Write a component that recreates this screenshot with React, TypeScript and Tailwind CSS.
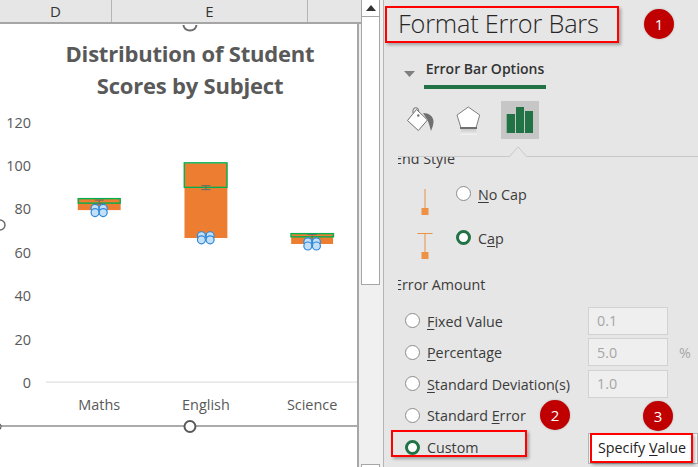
import React from "react";

const font = '"Open Sans", "Noto Sans", sans-serif';

function Radio({ on }: { on?: boolean }) {
  return on ? (
    <span className="block w-[15px] h-[15px] shrink-0 rounded-full bg-white border-[3.5px] border-[#217346]" />
  ) : (
    <span className="block w-[15px] h-[15px] shrink-0 rounded-full bg-white border border-[#8c8c8c]" />
  );
}

function Option({ label, on, input, unit }: { label: React.ReactNode; on?: boolean; input?: string; unit?: string }) {
  return (
    <div className="flex items-center h-[31.6px] pl-[7px]">
      <Radio on={on} />
      <span className="ml-[7px] w-[161px] pt-[1px] text-[14.3px] text-[#3b3b3b] whitespace-nowrap">{label}</span>
      {input && (
        <span className="flex items-center w-[80px] h-[28px] px-2 bg-[#efefef] border border-[#d2d2d2] text-[14.3px] text-[#a6a6a6]">
          {input}
        </span>
      )}
      {unit && <span className="ml-[11px] text-[14.3px] text-[#a6a6a6]">{unit}</span>}
    </div>
  );
}

function Badge({ n, className }: { n: string; className: string }) {
  return (
    <span className={"absolute flex items-center justify-center w-[30px] h-[30px] rounded-full bg-[#c00000] text-white text-[15px] shadow-[0_0_2px_rgba(0,0,0,0.25)] " + className}>
      {n}
    </span>
  );
}

function Chart() {
  const labels: [string, number][] = [["120", 123], ["100", 166], ["80", 209], ["60", 253], ["40", 296], ["20", 340], ["0", 383]];
  const dots = (a: number, b: number, y1: number, y2: number) =>
    [[a, y1], [b, y1], [a, y2], [b, y2]].map(([cx, cy], i) => (
      <circle key={i} cx={cx} cy={cy} r="4" fill="#c4e0f7" stroke="#2e88d8" strokeWidth="1.2" />
    ));
  const whisker = (x: number, y1: number, y2: number) => (
    <g stroke="#5f6b66" strokeWidth="1">
      <line x1={x - 4.5} x2={x + 4.5} y1={y1} y2={y1} />
      <line x1={x - 4.5} x2={x + 4.5} y1={y2} y2={y2} />
      <line x1={x} x2={x} y1={y1} y2={y2} />
    </g>
  );
  return (
    <svg className="absolute inset-0 w-full h-full" viewBox="0 24 358 443" style={{ fontFamily: font }}>
      <path d="M184 24.500a6 5 0 0 0 13 0" fill="white" stroke="#6b6b6b" strokeWidth="2" />
      <path d="M0 220a5 5 0 0 1 0 10" fill="white" stroke="#6b6b6b" strokeWidth="1.500" />
      {labels.map(([t, y]) => (
        <text key={t} x="31" y={y + 5} textAnchor="end" fontSize="14.500" fill="#595959">{t}</text>
      ))}
      <line x1="46" x2="358" y1="382.500" y2="382.500" stroke="#d9d9d9" />

      <rect x="78" y="198" width="43" height="12" fill="#ed7d31" />
      <rect x="78.500" y="198.500" width="42" height="4.500" fill="none" stroke="#00b050" strokeWidth="1.400" />
      {whisker(99.500, 200, 204)}
      {dots(95.300, 103.500, 208.300, 212.500)}

      <rect x="185" y="163" width="43" height="75" fill="#ed7d31" />
      <rect x="184.800" y="162.600" width="42.800" height="24.600" fill="none" stroke="#00b050" strokeWidth="1.400" />
      {whisker(206.500, 185.500, 189.500)}
      {dots(202, 210.700, 235.700, 239.800)}

      <rect x="292" y="234" width="42" height="10" fill="#ed7d31" />
      <rect x="291.800" y="233.600" width="42.600" height="3.200" fill="none" stroke="#00b050" strokeWidth="1.400" />
      {whisker(313, 234.500, 240)}
      {dots(308.700, 317.300, 241.800, 246)}

      <text x="99.500" y="410" textAnchor="middle" fontSize="14.500" fill="#595959">Maths</text>
      <text x="206.500" y="410" textAnchor="middle" fontSize="14.500" fill="#595959">English</text>
      <text x="313" y="410" textAnchor="middle" fontSize="14.500" fill="#595959">Science</text>

      <line x1="0" x2="358" y1="426.500" y2="426.500" stroke="#595959" strokeWidth="1.200" />
      <circle cx="190.500" cy="427" r="5.500" fill="white" stroke="#595959" strokeWidth="2" />
      <circle cx="-2" cy="427" r="3" fill="white" stroke="#595959" strokeWidth="1.200" />
    </svg>
  );
}

function CapIcon({ cap }: { cap?: boolean }) {
  return (
    <svg width="16" height="28" viewBox="0 0 16 28" className="shrink-0 mt-[2px]">
      {cap ? (
        <>
          <line x1="0.500" x2="15.500" y1="1.500" y2="1.500" stroke="#ed9145" />
          <line x1="8" x2="8" y1="1" y2="22" stroke="#ed9145" />
          <rect x="4.500" y="20" width="7" height="7" fill="#ed9145" />
        </>
      ) : (
        <>
          <line x1="8" x2="8" y1="1" y2="22" stroke="#ed9145" />
          <rect x="4.500" y="20" width="7" height="7" fill="#ed9145" />
        </>
      )}
    </svg>
  );
}

export default function App() {
  return (
    <div className="relative flex w-[698px] h-[467px] overflow-hidden bg-[#f0f0f0]" style={{ fontFamily: font }}>
      {/* Sheet side */}
      <div className="flex flex-col w-[361px] shrink-0">
        <div className="flex h-[24px] shrink-0 bg-[#e6e6e6] border-b-2 border-[#a6a6a6] text-[15px] text-[#333]">
          <div className="flex items-center justify-center w-[112px] border-r border-[#b5b5b5]">D</div>
          <div className="flex items-center justify-center w-[196px] border-r border-[#b5b5b5]">E</div>
          <div className="flex-1" />
        </div>
        <div className="relative flex-1 w-[359px] bg-white border-r-2 border-[#a6a6a6]">
          <Chart />
          <h2 className="relative pt-[13px] text-center text-[22px] leading-[32px] font-bold text-[#595959] pl-[23px] tracking-[-0.2px]">
            Distribution of Student
            <br />
            Scores by Subject
          </h2>
        </div>
      </div>

      {/* Sheet scrollbar */}
      <div className="flex flex-col w-[19px] shrink-0">
        <div className="flex items-center justify-center h-[17px] bg-white border border-[#a6a6a6] border-t-0">
          <svg width="10" height="6" viewBox="0 0 10 6"><path d="M5 0l5 6H0z" fill="#333" /></svg>
        </div>
        <div className="h-[268px] bg-white border-x border-b border-[#a6a6a6]" />
        <div className="flex-1" />
        <div className="h-[3px] bg-white border border-b-0 border-[#a6a6a6]" />
      </div>

      {/* Format pane */}
      <div className="flex flex-col flex-1 ml-[3px] bg-[#e6e6e6] border-l border-[#b4b4b4]">
        <div className="flex items-center h-[49px] pl-[14px] pb-[1px] text-[25.300px] font-light text-[#262626] whitespace-nowrap tracking-[-0.2px]">
          Format Error Bars
        </div>

        <div className="flex h-[40px] pl-[20px]">
          <svg width="11" height="6" viewBox="0 0 11 6" className="mt-[22px] shrink-0"><path d="M0 0h11L5.500 6z" fill="#7f7f7f" /></svg>
          <div className="ml-[9px] w-[122px] h-[40px] border-b-[4px] border-[#217346] text-center text-[14px] font-semibold text-[#333] pt-[9px] whitespace-nowrap">
            Error Bar Options
          </div>
        </div>

        <div className="flex items-center h-[38px] mt-[12px] pl-[21px]">
          <svg width="30" height="30" viewBox="405 106 30 30" className="shrink-0 mt-[2px]">
            <path d="M413 113v-2.500a2.800 2.800 0 0 1 5.600 0V116" fill="none" stroke="#6f6f6f" strokeWidth="1" />
            <path d="M423 113c6 0 10 3 10.500 8 .2 3-1 6-2.500 10-1-4-2-7-3.500-11z" fill="#6f6f6f" />
            <path d="M416.500 109.500 427.500 120 418.300 130.500 407.500 120.500z" fill="white" stroke="#6f6f6f" strokeWidth="1" />
            <circle cx="418.300" cy="115.500" r="1.200" fill="#6f6f6f" />
          </svg>
          <svg width="26" height="30" viewBox="457 106 26 30" className="ml-[21px] shrink-0 mt-[2px]">
            <defs>
              <linearGradient id="pentShade" x1="0" y1="0" x2="0" y2="1">
                <stop offset="0" stopColor="#c8c8c8" />
                <stop offset="1" stopColor="#f4f4f4" />
              </linearGradient>
            </defs>
            <path d="M469.300 107 480.700 115 477 128H462L458 115z" fill="white" stroke="#7f7f7f" strokeWidth="1" />
            <rect x="461" y="127" width="17" height="2" fill="#6f6f6f" />
            <path d="M462 129h15l1 6h-17z" fill="url(#pentShade)" />
          </svg>
          <div className="flex items-center justify-center w-[38px] h-[38px] ml-[19px] bg-[#c6c6c6]">
            <svg width="28" height="26" viewBox="506 107 28 26">
              <rect x="506.700" y="114" width="8.300" height="19" fill="#217346" />
              <rect x="516" y="107" width="8" height="26" fill="#217346" />
              <rect x="525" y="111" width="8" height="22" fill="#217346" />
            </svg>
          </div>
        </div>

        <div className="relative h-[18px] ml-[14px] border-b border-[#c8c8c8] shrink-0">
          <svg width="18" height="11" viewBox="0 0 18 11" className="absolute right-[171px] bottom-[-1px]">
            <path d="M0 10.500h1L9 1l8 9.500h1V11H0z" fill="#e6e6e6" />
            <path d="M0.500 10.500 9 .8 17.500 10.500" fill="none" stroke="#c8c8c8" />
          </svg>
        </div>

        <div className="flex-1 ml-[14px] overflow-hidden text-[14.300px] text-[#3b3b3b]">
          <div className="-mt-[5px] -ml-[4px] h-[14px] leading-[14px] whitespace-nowrap">End Style</div>

          <div className="flex items-start h-[44px] mt-[20px] pl-[19px]">
            <CapIcon />
            <div className="ml-[23px]"><Radio /></div>
            <span className="ml-[7px] leading-[17px]"><u className="underline-offset-2">N</u>o Cap</span>
          </div>
          <div className="flex items-start h-[44px] pl-[19px]">
            <CapIcon cap />
            <div className="ml-[23px]"><Radio on /></div>
            <span className="ml-[7px] leading-[17px]">C<u className="underline-offset-2">a</u>p</span>
          </div>

          <div className="-ml-[4px] mt-[1px] h-[20px] leading-[20px] whitespace-nowrap">Error Amount</div>

          <div className="mt-[10px]">
            <Option label={<><u className="underline-offset-2">F</u>ixed Value</>} input="0.1" />
            <Option label={<><u className="underline-offset-2">P</u>ercentage</>} input="5.0" unit="%" />
            <Option label={<><u className="underline-offset-2">S</u>tandard Deviation(s)</>} input="1.0" />
            <Option label={<>Standard <u className="underline-offset-2">E</u>rror</>} />
            <div className="flex items-center h-[31.600px] pl-[7px]">
              <Radio on />
              <span className="ml-[7px] w-[161px] pt-[1px] whitespace-nowrap"><u className="underline-offset-2">C</u>ustom</span>
              <span className="flex items-center h-[31px] w-[110px] pl-[9px] mt-[2px] bg-white border border-[#b5b5b5] text-[#222] whitespace-nowrap">
                Specify <u className="ml-[4px] underline-offset-2">V</u>alue
              </span>
            </div>
          </div>
        </div>
      </div>

      {/* Annotations */}
      <span className="absolute left-[385px] top-[6px] w-[234px] h-[37px] border-2 border-[#ff0000] shadow-[2px_2px_3px_rgba(0,0,0,0.3)]" />
      <span className="absolute left-[391px] top-[430px] w-[136px] h-[27px] border-2 border-[#ff0000] shadow-[2px_2px_3px_rgba(0,0,0,0.3)]" />
      <span className="absolute left-[590px] top-[433px] w-[103px] h-[30px] border-2 border-[#ff0000] shadow-[2px_2px_3px_rgba(0,0,0,0.3)]" />
      <Badge n="1" className="left-[644px] top-[9px]" />
      <Badge n="2" className="left-[540px] top-[400px]" />
      <Badge n="3" className="left-[643px] top-[401px]" />
    </div>
  );
}
